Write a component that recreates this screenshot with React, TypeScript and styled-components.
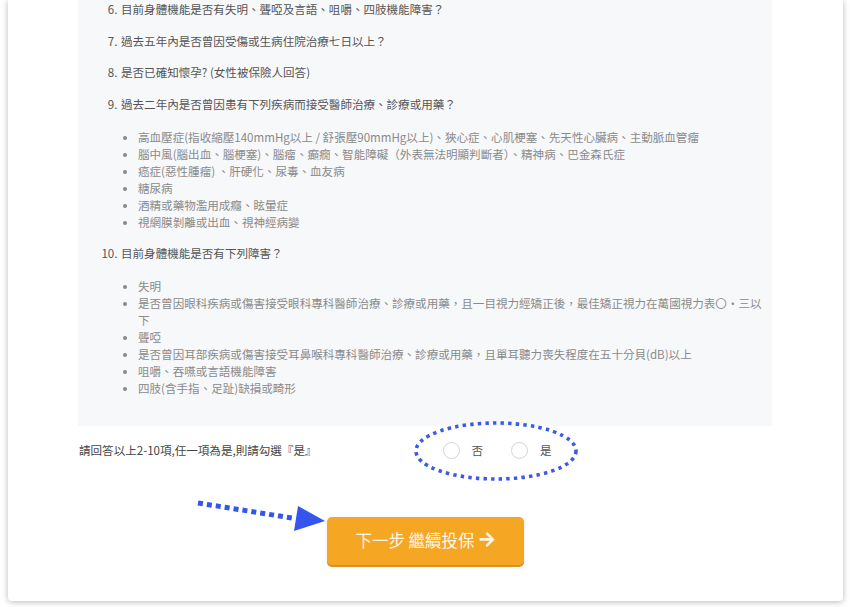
import styled, { createGlobalStyle } from "styled-components";

const GlobalStyle = createGlobalStyle`
  html, body {
    margin: 0;
    padding: 0;
    background: #ffffff;
    font-family: "Noto Sans CJK TC", "Liberation Sans", sans-serif;
    overflow: hidden;
  }
`;

const questions = [
  { no: 6, text: "目前身體機能是否有失明、聾啞及言語、咀嚼、四肢機能障害？" },
  { no: 7, text: "過去五年內是否曾因受傷或生病住院治療七日以上？" },
  { no: 8, text: "是否已確知懷孕? (女性被保險人回答)" },
  {
    no: 9,
    text: "過去二年內是否曾因患有下列疾病而接受醫師治療、診療或用藥？",
    items: [
      "高血壓症(指收縮壓140mmHg以上 / 舒張壓90mmHg以上)、狹心症、心肌梗塞、先天性心臟病、主動脈血管瘤",
      "腦中風(腦出血、腦梗塞)、腦瘤、癲癇、智能障礙（外表無法明顯判斷者）、精神病、巴金森氏症",
      "癌症(惡性腫瘤) 、肝硬化、尿毒、血友病",
      "糖尿病",
      "酒精或藥物濫用成癮、眩暈症",
      "視網膜剝離或出血、視神經病變",
    ],
  },
  {
    no: 10,
    text: "目前身體機能是否有下列障害？",
    items: [
      "失明",
      "是否曾因眼科疾病或傷害接受眼科專科醫師治療、診療或用藥，且一目視力經矯正後，最佳矯正視力在萬國視力表〇‧三以下",
      "聾啞",
      "是否曾因耳部疾病或傷害接受耳鼻喉科專科醫師治療、診療或用藥，且單耳聽力喪失程度在五十分貝(dB)以上",
      "咀嚼、吞嚥或言語機能障害",
      "四肢(含手指、足趾)缺損或畸形",
    ],
  },
];

export default function App() {
  return (
    <>
      <GlobalStyle />
      <Page>
        <Card>
          <Panel>
            <QuestionList start={6}>
              {questions.map((q) => (
                <Question key={q.no}>
                  {q.text}
                  {q.items && (
                    <SubList>
                      {q.items.map((item) => (
                        <SubItem key={item}>{item}</SubItem>
                      ))}
                    </SubList>
                  )}
                </Question>
              ))}
            </QuestionList>
          </Panel>

          <AnswerRow>
            <AnswerLabel>請回答以上2-10項,任一項為是,則請勾選『是』</AnswerLabel>
            <RadioGroup>
              <RadioOption>
                <RadioCircle />
                <span>否</span>
              </RadioOption>
              <RadioOption>
                <RadioCircle />
                <span>是</span>
              </RadioOption>
              <Ellipse width="170" height="64" viewBox="0 0 170 64">
                <ellipse
                  cx="85"
                  cy="32"
                  rx="80"
                  ry="28"
                  fill="none"
                  stroke="#3b5be6"
                  strokeWidth="3.6"
                  strokeDasharray="3.4 4.2"
                />
              </Ellipse>
            </RadioGroup>
          </AnswerRow>

          <Actions>
            <ButtonWrap>
              <Pointer width="140" height="40" viewBox="0 0 140 40">
                <line
                  x1="8"
                  y1="5"
                  x2="102"
                  y2="20"
                  stroke="#3556ee"
                  strokeWidth="5"
                  strokeDasharray="5 4"
                />
                <polygon points="108,8 135,23 104,33" fill="#3556ee" />
              </Pointer>
              <NextButton type="button">
                下一步 繼續投保
                <svg width="16" height="15" viewBox="0 0 448 448">
                  <path
                    fill="currentColor"
                    d="M190.5 34.6l22.2-22.2c9.4-9.4 24.6-9.4 33.9 0l194.3 194.2c9.4 9.4 9.4 24.6 0 33.9L246.6 434.8c-9.4 9.4-24.6 9.4-33.9 0l-22.2-22.2c-9.5-9.5-9.3-25 .4-34.3L311.4 262H24c-13.3 0-24-10.7-24-24v-32c0-13.3 10.7-24 24-24h287.4L190.9 68.9c-9.8-9.3-10-24.8-.4-34.3z"
                  />
                </svg>
              </NextButton>
            </ButtonWrap>
          </Actions>
        </Card>
      </Page>
    </>
  );
}

const Page = styled.div`
  padding: 0 7px 6px 8px;
`;

const Card = styled.div`
  background: #ffffff;
  border-radius: 0 0 4px 4px;
  box-shadow: 0 1px 6px rgba(0, 0, 0, 0.28);
  padding: 0 71px 36px 70px;
`;

const Panel = styled.div`
  background: #f7f8fa;
  padding: 1px 8px 14px 0;
`;

const QuestionList = styled.ol`
  margin: 0;
  padding: 0 0 0 42px;
  color: #555555;
  font-size: 11.55px;
  line-height: 17px;
`;

const Question = styled.li`
  margin-bottom: 14.5px;
  padding-left: 1px;
`;

const SubList = styled.ul`
  margin: 16px 0 5px;
  padding-left: 17px;
  color: #8a8a8a;
  list-style: disc;
`;

const SubItem = styled.li`
  line-height: 17px;

  &::marker {
    font-size: 10px;
  }
`;

const AnswerRow = styled.div`
  display: grid;
  grid-template-columns: 1fr 1fr;
  align-items: center;
  padding: 16px 0 0 1px;
  height: 18px;
`;

const AnswerLabel = styled.div`
  color: #444444;
  font-size: 11.55px;
  line-height: 17px;
`;

const RadioGroup = styled.div`
  position: relative;
  display: flex;
  align-items: center;
  gap: 28px;
  padding-left: 17px;
`;

const RadioOption = styled.label`
  display: flex;
  align-items: center;
  gap: 12px;
  color: #555555;
  font-size: 11.55px;
  line-height: 17px;
`;

const RadioCircle = styled.span`
  width: 15px;
  height: 15px;
  border-radius: 50%;
  border: 1px solid #d4d4d4;
  background: #ffffff;
`;

const Ellipse = styled.svg`
  position: absolute;
  left: -15px;
  top: -23px;
  pointer-events: none;
`;

const Actions = styled.div`
  display: flex;
  justify-content: center;
  margin-top: 57px;
`;

const ButtonWrap = styled.div`
  position: relative;
`;

const Pointer = styled.svg`
  position: absolute;
  left: -137px;
  top: -19px;
  pointer-events: none;
`;

const NextButton = styled.button`
  display: flex;
  align-items: center;
  justify-content: center;
  gap: 4px;
  width: 197px;
  height: 48px;
  border: none;
  border-radius: 5px;
  background: #f5a623;
  box-shadow: 0 2px 0 #d9902a, 0 1px 3px rgba(0, 0, 0, 0.12);
  color: #fff6e6;
  font-family: "Noto Sans CJK TC", sans-serif;
  font-size: 16.5px;
  cursor: pointer;
  padding: 0 0 2px;
`;
